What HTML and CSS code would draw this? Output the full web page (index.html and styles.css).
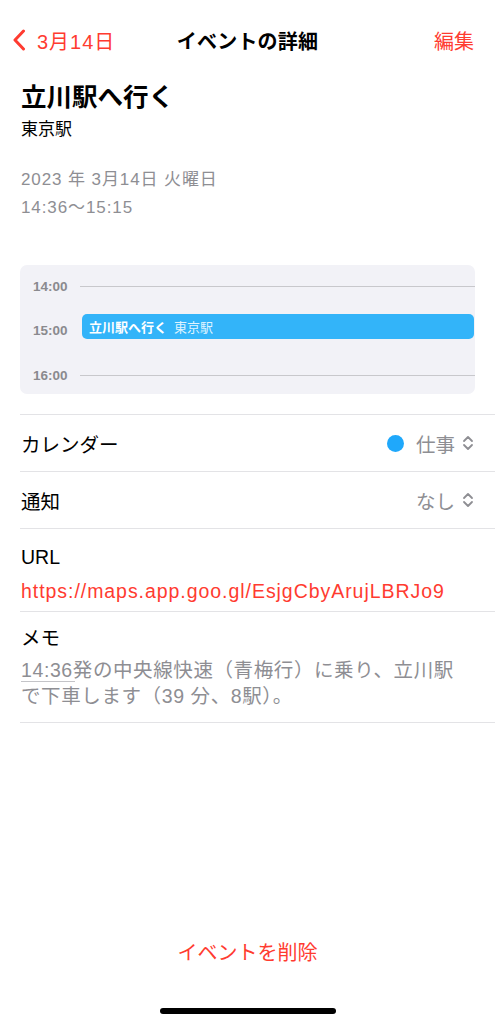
FILE: index.html
```html
<!DOCTYPE html>
<html lang="ja">
<head>
  <meta charset="UTF-8">
  <meta name="viewport" content="width=device-width, initial-scale=1.0">
  <title>イベントの詳細</title>
  <link rel="stylesheet" href="styles.css">
</head>
<body>
  <div class="screen">
    <div class="nav">
      <div class="nav-back">
        <svg class="back-icon" width="14" height="22" viewBox="0 0 14 22">
          <path d="M11.5 2 L3 11 L11.5 20" fill="none" stroke="#ff3b30" stroke-width="3" stroke-linecap="round" stroke-linejoin="round"/>
        </svg>
        <span>3月14日</span>
      </div>
      <div class="nav-title">イベントの詳細</div>
      <div class="nav-edit">編集</div>
    </div>

    <div class="event-head">
      <h1 class="event-title">立川駅へ行く</h1>
      <div class="event-place">東京駅</div>
    </div>

    <div class="event-when">
      <div>2023 年 3月14日 火曜日</div>
      <div>14:36〜15:15</div>
    </div>

    <div class="day-view">
      <div class="hour"><span class="hour-label">14:00</span><span class="hour-line"></span></div>
      <div class="hour"><span class="hour-label">15:00</span><span class="hour-line hidden"></span></div>
      <div class="hour"><span class="hour-label">16:00</span><span class="hour-line"></span></div>
      <div class="day-event">
        <strong>立川駅へ行く</strong>
        <span>東京駅</span>
      </div>
    </div>

    <div class="details">
      <div class="row">
        <span class="row-label">カレンダー</span>
        <span class="row-value">
          <span class="cal-dot"></span>
          仕事
          <svg class="updown" width="12" height="16" viewBox="0 0 12 16">
            <path d="M2 6 L6 2 L10 6 M2 10 L6 14 L10 10" fill="none" stroke="#8e8e93" stroke-width="1.8" stroke-linecap="round" stroke-linejoin="round"/>
          </svg>
        </span>
      </div>
      <div class="row">
        <span class="row-label">通知</span>
        <span class="row-value">
          なし
          <svg class="updown" width="12" height="16" viewBox="0 0 12 16">
            <path d="M2 6 L6 2 L10 6 M2 10 L6 14 L10 10" fill="none" stroke="#8e8e93" stroke-width="1.8" stroke-linecap="round" stroke-linejoin="round"/>
          </svg>
        </span>
      </div>
      <div class="row row-block url-row">
        <div class="row-label">URL</div>
        <div class="url-link">https://maps.app.goo.gl/EsjgCbyArujLBRJo9</div>
      </div>
      <div class="row row-block memo-row">
        <div class="row-label">メモ</div>
        <p class="memo-text">14:36発の中央線快速（青梅行）に乗り、立川駅で下車します（39 分、8駅）。</p>
      </div>
    </div>

    <div class="footer">
      <div class="delete">イベントを削除</div>
      <div class="home-bar"></div>
    </div>
  </div>
</body>
</html>
```

FILE: styles.css
```css
* {
  box-sizing: border-box;
}

body {
  margin: 0;
  background: #ffffff;
  color: #000000;
  font-family: "Liberation Sans", "Noto Sans CJK JP", sans-serif;
}

.screen {
  display: flex;
  flex-direction: column;
  min-height: 1024px;
}

/* navigation bar */
.nav {
  display: grid;
  grid-template-columns: 1fr auto 1fr;
  align-items: center;
  height: 80px;
  padding: 0 21px;
  font-size: 20px;
}

.nav-back {
  display: flex;
  align-items: center;
  gap: 11px;
  margin-left: -9px;
  color: #ff3b30;
  letter-spacing: 1px;
}

.back-icon {
  display: block;
}

.nav-title {
  font-weight: bold;
  letter-spacing: 0.2px;
}

.nav-edit {
  color: #ff3b30;
  text-align: right;
}

/* heading */
.event-head {
  padding: 0 21px;
}

.event-title {
  margin: 0;
  font-size: 25.5px;
  line-height: 34px;
  font-weight: bold;
}

.event-place {
  font-size: 17px;
  line-height: 32px;
}

.event-when {
  margin-top: 20px;
  padding: 0 21px;
  color: #8e8e93;
  font-size: 17px;
  line-height: 28px;
  letter-spacing: 0.9px;
}

/* small day view */
.day-view {
  position: relative;
  margin: 43px 20px 0;
  height: 129px;
  background: #f2f2f7;
  border-radius: 7px;
  overflow: hidden;
}

.hour {
  display: flex;
  align-items: center;
  height: 44.5px;
}

.hour:first-child {
  margin-top: -1px;
}

.hour-label {
  width: 60px;
  padding-left: 13px;
  font-size: 13.5px;
  font-weight: bold;
  color: #8a8a8e;
}

.hour-line {
  flex: 1;
  height: 1px;
  background: #c8c8cc;
}

.hour-line.hidden {
  visibility: hidden;
}

.day-event {
  position: absolute;
  top: 49px;
  left: 62px;
  right: 1px;
  height: 25px;
  display: flex;
  align-items: center;
  gap: 7px;
  padding-left: 7px;
  background: #33b4f9;
  border-radius: 5px;
  font-size: 13px;
  color: #ffffff;
}

.day-event span {
  color: #dff3ff;
}

/* detail rows */
.details {
  margin-top: 20px;
  margin-left: 20px;
  border-bottom: 1px solid #e3e3e6;
}

.row {
  display: flex;
  align-items: center;
  justify-content: space-between;
  height: 57px;
  padding-right: 21px;
  border-top: 1px solid #e3e3e6;
  font-size: 19.5px;
}

.row-label {
  padding-left: 1px;
}

.row-value {
  display: flex;
  align-items: center;
  color: #8e8e93;
}

.cal-dot {
  width: 17px;
  height: 17px;
  border-radius: 50%;
  background: #1fa8fb;
  margin-right: 12px;
}

.updown {
  margin-left: 7px;
}

.row-block {
  display: block;
  height: auto;
}

.url-row {
  height: 83px;
  padding-top: 14px;
  line-height: 28px;
}

.url-link {
  margin-top: 6px;
  padding-left: 1px;
  color: #ff3b30;
  font-size: 19.5px;
  letter-spacing: 0.95px;
}

.memo-row {
  height: 111px;
  padding-top: 12px;
  line-height: 28px;
}

.memo-text {
  position: relative;
  margin: 5px 0 0;
  padding-left: 1px;
  color: #8e8e93;
  line-height: 26px;
  letter-spacing: 0.6px;
}

/* data-detector underline under the leading time */
.memo-text::after {
  content: "";
  position: absolute;
  left: 1px;
  top: 24px;
  width: 54px;
  height: 1px;
  background: #c4c4c8;
}

/* bottom */
.footer {
  margin-top: auto;
  display: flex;
  flex-direction: column;
  align-items: center;
}

.delete {
  color: #ff3b30;
  font-size: 20px;
  line-height: 28px;
}

.home-bar {
  margin: 41px 0 10px;
  width: 176px;
  height: 6px;
  border-radius: 3px;
  background: #000000;
}
```
